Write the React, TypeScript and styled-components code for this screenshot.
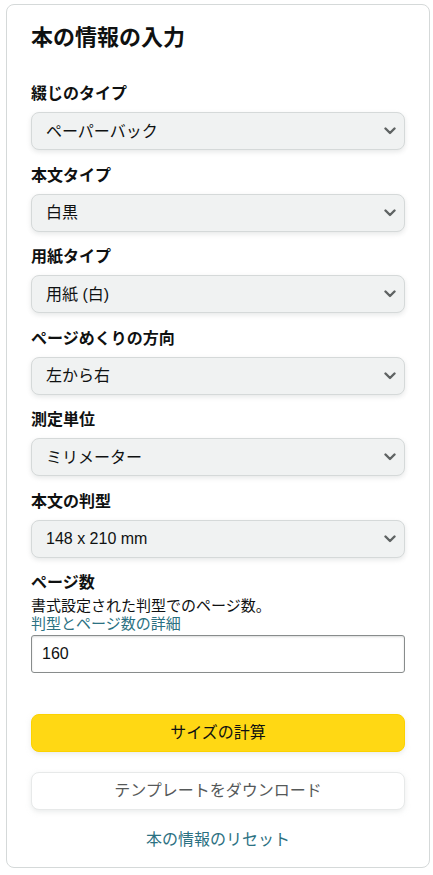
import React from "react";
import styled, { createGlobalStyle } from "styled-components";

const GlobalStyle = createGlobalStyle`
  html, body { margin: 0; padding: 0; background: #ffffff; }
  body {
    font-family: "Liberation Sans", Arial, "Noto Sans CJK JP", sans-serif;
    color: #0f1111;
  }
  * { box-sizing: border-box; }
`;

const Page = styled.div`
  padding: 4px 3px 8px 6px;
`;

const Card = styled.section`
  width: 424px;
  border: 1px solid #d5d9d9;
  border-radius: 8px;
  padding: 19px 24px 17px 24px;
  background: #fff;
`;

const Title = styled.h1`
  margin: 0 0 32px 0;
  font-size: 22px;
  line-height: 28px;
  font-weight: 700;
  color: #0f1111;
`;

const Field = styled.div<{ $last?: boolean }>`
  display: flex;
  flex-direction: column;
  margin-bottom: ${(p) => (p.$last ? "0" : "15.5px")};
`;

const Label = styled.label<{ $tight?: boolean }>`
  font-size: 16px;
  line-height: 20px;
  font-weight: 700;
  color: #0f1111;
  margin-bottom: ${(p) => (p.$tight ? "4px" : "8px")};
`;

const SelectWrap = styled.div`
  position: relative;
  height: 38px;
`;

const Select = styled.select`
  appearance: none;
  -webkit-appearance: none;
  width: 100%;
  height: 38px;
  padding: 0 40px 0 14px;
  font-family: inherit;
  font-size: 16px;
  color: #0f1111;
  background: #f0f2f2;
  border: 1px solid #d5d9d9;
  border-radius: 8px;
  box-shadow: 0 2px 5px 0 rgba(213, 217, 217, 0.6);
  outline: none;
`;

const Chevron = styled.svg`
  position: absolute;
  right: 9px;
  top: 50%;
  width: 12px;
  height: 8px;
  margin-top: -4px;
  pointer-events: none;
`;

const Help = styled.div`
  font-size: 15px;
  line-height: 18px;
  color: #0f1111;
`;

const Link = styled.a`
  font-size: 15px;
  line-height: 18px;
  color: #2b7182;
  text-decoration: none;
  margin-bottom: 2px;
`;

const Input = styled.input`
  width: 100%;
  height: 38px;
  padding: 0 10px;
  font-family: inherit;
  font-size: 16px;
  color: #0f1111;
  border: 1px solid #888c8c;
  border-radius: 3px;
  box-shadow: inset 0 1px 2px rgba(15, 17, 17, 0.15);
  outline: none;
`;

const Actions = styled.div`
  display: flex;
  flex-direction: column;
  align-items: stretch;
  margin-top: 41px;
  gap: 20px;
`;

const Button = styled.button<{ $primary?: boolean }>`
  height: 38px;
  width: 100%;
  border-radius: 8px;
  font-family: inherit;
  font-size: 16px;
  line-height: 20px;
  cursor: pointer;
  border: 1px solid ${(p) => (p.$primary ? "#fcd200" : "#e7e9e9")};
  background: ${(p) => (p.$primary ? "#ffd814" : "#ffffff")};
  color: ${(p) => (p.$primary ? "#0f1111" : "#565959")};
  box-shadow: 0 2px 5px 0 rgba(213, 217, 217, 0.5);
`;

const Reset = styled.a`
  display: block;
  text-align: center;
  font-size: 16px;
  line-height: 20px;
  color: #2b7182;
  text-decoration: none;
`;

const ResetRow = styled.div`
  display: flex;
  justify-content: center;
`;

const ChevronIcon = () => (
  <Chevron viewBox="0 0 12 8" aria-hidden="true">
    <path d="M1.5 1.5 L6 6 L10.5 1.5" fill="none" stroke="#5f6363" strokeWidth="2.4" strokeLinecap="round" strokeLinejoin="round" />
  </Chevron>
);

type SelectFieldProps = { label: string; value: string };

const SelectField = ({ label, value }: SelectFieldProps) => (
  <Field>
    <Label>{label}</Label>
    <SelectWrap>
      <Select defaultValue={value}>
        <option value={value}>{value}</option>
      </Select>
      <ChevronIcon />
    </SelectWrap>
  </Field>
);

const fields: SelectFieldProps[] = [
  { label: "綴じのタイプ", value: "ペーパーバック" },
  { label: "本文タイプ", value: "白黒" },
  { label: "用紙タイプ", value: "用紙 (白)" },
  { label: "ページめくりの方向", value: "左から右" },
  { label: "測定単位", value: "ミリメーター" },
  { label: "本文の判型", value: "148 x 210 mm" },
];

export default function App() {
  return (
    <>
      <GlobalStyle />
      <Page>
        <Card>
          <Title>本の情報の入力</Title>
          {fields.map((f) => (
            <SelectField key={f.label} {...f} />
          ))}
          <Field $last>
            <Label $tight>ページ数</Label>
            <Help>書式設定された判型でのページ数。</Help>
            <Link href="#">判型とページ数の詳細</Link>
            <Input defaultValue="160" />
          </Field>
          <Actions>
            <Button $primary>サイズの計算</Button>
            <Button>テンプレートをダウンロード</Button>
            <ResetRow>
              <Reset href="#">本の情報のリセット</Reset>
            </ResetRow>
          </Actions>
        </Card>
      </Page>
    </>
  );
}
